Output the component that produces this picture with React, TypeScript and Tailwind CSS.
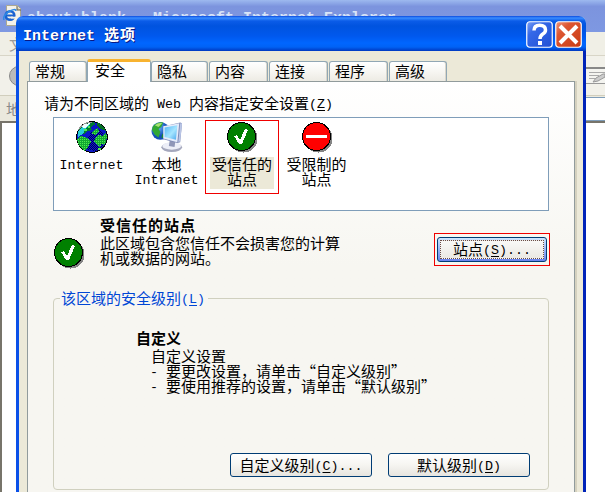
import React from "react";

function T({ children, hot }: { children: string; hot?: string }) {
  const parts = children.split(/([\x20-\x7e]+)/);
  return (
    <>
      {parts.map((p, i) =>
        i % 2 === 0 ? (
          <span key={i}>{p}</span>
        ) : (
          <span key={i} className="align-[1px] font-['Liberation_Mono',monospace] text-[13.33px] leading-[0]">
            {hot && p.includes(hot) ? (
              <>
                {p.slice(0, p.indexOf(hot))}
                <span className="underline decoration-1 underline-offset-2">{hot}</span>
                {p.slice(p.indexOf(hot) + 1)}
              </>
            ) : (
              p
            )}
          </span>
        )
      )}
    </>
  );
}

function Check() {
  return (
    <svg width="32" height="32" viewBox="0 0 32 32" shapeRendering="crispEdges">
      <circle cx="17.5" cy="17.5" r="14" fill="#858585" />
      <circle cx="15.5" cy="15.5" r="14" fill="#008000" stroke="#000" />
      <path d="M8 15l3-1 3 5 5-11 3 1-6 14h-3z" fill="#fff" />
    </svg>
  );
}

function Stop() {
  return (
    <svg width="32" height="32" viewBox="0 0 32 32" shapeRendering="crispEdges">
      <circle cx="17.5" cy="17.5" r="14" fill="#858585" />
      <circle cx="15.5" cy="15.5" r="14" fill="#f00" stroke="#000" />
      <path d="M5 14h21v3H5z" fill="#fff" />
    </svg>
  );
}

function Globe() {
  return (
    <svg width="32" height="32" viewBox="0 0 32 32" shapeRendering="crispEdges">
      <defs>
        <pattern id="dither" width="2" height="2" patternUnits="userSpaceOnUse">
          <path d="M0 0h1v1H0zM1 1h1v1H1z" fill="#00005c" />
        </pattern>
        <pattern id="leaf" width="2" height="2" patternUnits="userSpaceOnUse">
          <path d="M0 0h2v2H0z" fill="#12a832" />
          <path d="M0 0h1v1H0z" fill="#50ea50" />
        </pattern>
      </defs>
      <circle cx="16" cy="16" r="15.3" fill="#0b18c8" stroke="#000" />
      <path d="M15 11l9-2 6 8-1 7-8 6-9-1-3-6z" fill="url(#dither)" />
      <path d="M3 8Q8 1 17 1l3 2-5 3 1 3-5 1-2 3-6 1z" fill="#007a32" />
      <path d="M2 10l5-5 7-2-5 5-2 5-5 3z" fill="#26cfd8" />
      <path d="M5 6l4-3 5-1-5 5z" fill="#f0ffff" />
      <path d="M1 18l4-3 6 2 4 4-3 5-3 4Q2 25 1 18z" fill="url(#leaf)" />
      <path d="M21 1q7 3 9 9l-5-2-4-3z" fill="#046e24" />
      <path d="M17 10l5-3 1 3-4 4-3-1z" fill="url(#leaf)" />
      <path d="M19 17l4-3 3 1 4-4q2 8-2 13l-3-1-1 4-3-3-3-3z" fill="url(#leaf)" />
      <path d="M8 8h3v2H8zM12 5h2v2h-2zM22 27h3v2h-3z" fill="#50ea50" />
      <path d="M2 9Q7 1 16 1" fill="none" stroke="#999" />
    </svg>
  );
}

function Intranet() {
  return (
    <svg width="32" height="32" viewBox="0 0 34 33">
      <defs>
        <linearGradient id="screen" x2="1" y2="1">
          <stop stopColor="#51b5f5" />
          <stop offset=".55" stopColor="#a5e5ff" />
          <stop offset="1" stopColor="#4ca8ee" />
        </linearGradient>
        <radialGradient id="sea" cx=".35" cy=".3">
          <stop stopColor="#6fb8ff" />
          <stop offset="1" stopColor="#1350b8" />
        </radialGradient>
      </defs>
      <circle cx="10" cy="10" r="9.5" fill="url(#sea)" />
      <path d="M2 5q5-5 11-4l-2 5-3 2 2 3-2 6-4-3-3-5z" fill="#32a834" />
      <path d="M4 4q4-3 8-2L8 6z" fill="#a9e274" />
      <path d="M12 13l4 2-2 3-3-1z" fill="#208a35" />
      <ellipse cx="22" cy="27.5" rx="11" ry="5" fill="#a5a8bd" />
      <ellipse cx="22" cy="26" rx="10" ry="4" fill="#eceef7" />
      <path d="M20 19l6 1-1 7-6-1z" fill="#8f96b7" />
      <path d="M14 5l17-4 2 1-2 20-3 1-15-4z" fill="#7c89b5" />
      <path d="M13 5l17-3-2 20-15-4z" fill="#e4ebfa" />
      <path d="M14.5 6.5L28 4l-1.5 15.5-12-3z" fill="url(#screen)" />
      <path d="M31 2l2 0-2 19-2 1z" fill="#bac6e6" />
    </svg>
  );
}

function IeIcon() {
  return (
    <svg width="18" height="22" viewBox="0 0 18 22" className="shrink-0">
      <path d="M3.500.5h11l3 3v17h-14z" fill="#f4f2e9" stroke="#aba891" />
      <path d="M14 1v4h4" fill="#d9d5bc" stroke="#66614b" />
      <circle cx="7" cy="10.500" r="4.300" fill="none" stroke="#1a62d0" strokeWidth="2.600" />
      <path d="M4 10.500h7" stroke="#1a62d0" strokeWidth="2" />
      <path d="M8 11.700h5v2H8z" fill="#f4f2e9" />
      <path d="M1 15Q-1 11 7 6q6-3 6 0" fill="none" stroke="#2e8ae6" strokeWidth="1.500" />
    </svg>
  );
}

function BackWindow() {
  return (
    <div className="flex h-[492px] w-[605px] flex-col overflow-hidden bg-white">
      <div className="flex h-8 shrink-0 bg-linear-to-b from-[#9db9ef] via-[#7c94de] via-20% to-[#7e98e2] pt-[5px] pl-[3px]">
        <IeIcon />
        <span className="ml-[6px] pt-[6px] font-['Liberation_Mono',monospace] text-[15px] leading-[15px] font-bold whitespace-pre text-[#d8e4f8]">
          about:blank - Microsoft Internet Explorer
        </span>
      </div>
      <div className="flex h-6 shrink-0 items-center border-b border-[#d8d5c7] bg-[#f0efe6] pl-[9px] text-[15px] text-[#999]">文件</div>
      <div className="flex h-10 shrink-0 items-center justify-between border-b border-[#d1cebd] bg-[#f2f1ea] pl-[9px]">
        <div className="size-5 rounded-full border border-[#888] bg-[#bbb]" />
        <svg width="24" height="18" viewBox="0 0 24 18">
          <path d="M1 .5h24v16H1z" fill="#f4f4f0" stroke="#999" />
          <path d="M0 1h24" stroke="#888" strokeWidth="2" />
          <path d="M8 5.500h16M8 8.500h10M8 11.500h6" stroke="#aaa" />
          <path d="M12 15l3-4 7-4 2 0v3l-7 4z" fill="#ccc" stroke="#999" />
        </svg>
      </div>
      <div className="flex h-[25px] shrink-0 items-center justify-between bg-[#ebe9dd] pl-[6px] text-[15px] text-[#888]">
        <span>地址</span>
        <div className="h-6 w-[25px] border-y border-[#7f9db9] bg-white" />
      </div>
      <div className="flex-1 border-t-2 border-l-2 border-[#77746a] bg-white" />
    </div>
  );
}

function Tab({ label, w }: { label: string; w: string }) {
  return (
    <div className={`${w} h-5 shrink-0 rounded-t-[3px] border border-b-0 border-[#91a7b4] bg-linear-to-b from-white via-[#f7f6f2] to-[#edebe4] pt-px pl-[5px] shadow-[inset_-1px_0_0_#d9d6cb]`}>
      <T>{label}</T>
    </div>
  );
}

function ZoneItem({ icon, lines }: { icon: React.ReactNode; lines: string[] }) {
  return (
    <div className="flex w-[75px] shrink-0 flex-col items-center pt-[3px]">
      <div className="flex h-[35px] justify-center">{icon}</div>
      {lines.map((l) => (
        <div key={l} className="h-[15px] whitespace-nowrap">
          <T>{l}</T>
        </div>
      ))}
    </div>
  );
}

function Button({ w, label, hot }: { w: string; label: string; hot: string }) {
  return (
    <button className={`${w} flex h-6 shrink-0 items-center justify-center rounded-[3px] border border-[#003c74] bg-linear-to-b from-white via-[#f6f5f1] to-[#e6e4df] pb-[2px] leading-[15px] whitespace-nowrap`}>
      <span>
        <T hot={hot}>{label}</T>
      </span>
    </button>
  );
}

function Dialog() {
  return (
    <div className="absolute top-4 left-4 flex h-[476px] w-[570px] flex-col overflow-hidden rounded-t-[7px] bg-[#ece9d8]">
      <div className="flex h-[35px] shrink-0 items-center bg-[linear-gradient(to_bottom,#0a4be0_0,#3a8dff_2px,#0b5ce8_5px,#0053df_10px,#0058ee_20px,#0066ff_27px,#0062f5_31px,#0038c0_35px)] pr-[4px] pl-[7px] text-white">
        <div className="flex-1 pt-[2px] text-[15px] leading-[17px] font-bold tracking-[0.9px] whitespace-pre [text-shadow:1px_1px_0_#0a1883]">
          <span className="font-['Liberation_Mono',monospace] text-[15px] tracking-[0px]">Internet </span>选项
        </div>
        <svg width="27" height="27" viewBox="0 0 27 27" className="mt-[1px]">
          <defs>
            <linearGradient id="help" x2="1" y2="1">
              <stop stopColor="#7da2f5" />
              <stop offset=".3" stopColor="#3568e8" />
              <stop offset="1" stopColor="#2050d4" />
            </linearGradient>
          </defs>
          <rect x=".75" y=".75" width="25.5" height="25.5" rx="3" fill="url(#help)" stroke="#fff" strokeWidth="1.2" />
          <path d="M8 9.500Q8 4.200 13.700 4.200 19.500 4.200 19.500 9q0 2.500-3 4.300Q14 15 14 18" fill="none" stroke="#fff" strokeWidth="3.500" />
          <path d="M12 20h4v4h-4z" fill="#fff" />
        </svg>
        <svg width="27" height="27" viewBox="0 0 27 27" className="mt-[1px] ml-[2px]">
          <defs>
            <linearGradient id="close" x2="1" y2="1">
              <stop stopColor="#ef9a80" />
              <stop offset=".3" stopColor="#dd5632" />
              <stop offset="1" stopColor="#c83b12" />
            </linearGradient>
          </defs>
          <rect x=".75" y=".75" width="25.5" height="25.5" rx="3" fill="url(#close)" stroke="#fff" strokeWidth="1.2" />
          <path d="M5 5l17 17M22 5L5 22" stroke="#fff" strokeWidth="4" />
        </svg>
      </div>
      <div className="flex min-h-0 flex-1 flex-col border-r-[3px] border-l-[3px] border-r-[#0023b8] border-l-[#0a50e8] px-2 pt-2">
        <div className="z-10 -mb-px flex h-[23px] shrink-0 items-end pr-2 pb-px pl-[2px]">
          <Tab w="w-[58px]" label="常规" />
          <div className="z-10 -mb-px h-[23px] w-16 shrink-0 rounded-t-[3px] border-x border-t-[3px] border-x-[#91a7b4] border-t-[#f8b330] bg-white pl-[7px]">
            安全
          </div>
          <Tab w="w-[57px]" label="隐私" />
          <Tab w="w-[59px] ml-[1px]" label="内容" />
          <Tab w="w-[59px] ml-[1px]" label="连接" />
          <Tab w="w-[59px] ml-[1px]" label="程序" />
          <Tab w="w-[58px] ml-[1px]" label="高级" />
        </div>
        <div className="flex min-h-0 flex-1 flex-col border-x border-t border-[#919b9c] bg-linear-to-b from-white to-[#f7f6f1] to-45% pr-[23px] pl-[25px] shadow-[2px_0_0_#d5d1bf]">
          <div className="mt-[13px] -ml-[9px] h-[15px] shrink-0">
            <T hot="Z">请为不同区域的 Web 内容指定安全设置(Z)</T>
          </div>
          <div className="mt-[7px] flex h-[94px] w-[496px] shrink-0 border border-[#7f9db9] bg-white">
            <ZoneItem icon={<Globe />} lines={["Internet"]} />
            <ZoneItem icon={<Intranet />} lines={["本地", "Intranet"]} />
            <div className="mt-[2px] ml-[1px] flex h-[74px] w-[74px] shrink-0 flex-col items-center border border-[#f00000]">
              <div className="flex h-9">
                <Check />
              </div>
              <div className="h-8 w-16 bg-[#ece9d8] text-center">
                <div className="-mt-px h-[15px]">受信任的</div>
                <div>站点</div>
              </div>
            </div>
            <ZoneItem icon={<Stop />} lines={["受限制的", "站点"]} />
          </div>
          <div className="mt-[6px] flex h-[50px] shrink-0">
            <div className="mt-[20px] w-12 shrink-0">
              <Check />
            </div>
            <div className="-ml-px w-[334px] shrink-0">
              <div className="h-[18px] font-bold tracking-[1px]">受信任的站点</div>
              <div>此区域包含您信任不会损害您的计算</div>
              <div>机或数据的网站。</div>
            </div>
            <div className="mt-[16px] h-[33px] w-[116px] shrink-0 border border-[#f00000] px-[2px] pt-[3px]">
              <button className="flex h-[25px] w-[110px] rounded-[3px] border border-[#003c74] bg-linear-to-b from-[#cee7ff] to-[#6982ee] p-[2px]">
                <span className="flex h-full w-full items-center justify-center border border-dotted border-[#6b4d48] bg-linear-to-b from-[#f9f9f7] to-[#ebe9e3] pb-[2px] whitespace-nowrap">
                  <span>
                    <T hot="S">站点(S)...</T>
                  </span>
                </span>
              </button>
            </div>
          </div>
          <div className="mt-[23px] flex h-[200px] w-[496px] shrink-0 flex-col">
            <div className="z-10 ml-[7px] h-[15px] w-[148px] bg-[#f7f6f2] pl-[1px] text-[#0046d5]">
              <T hot="L">该区域的安全级别(L)</T>
            </div>
            <div className="-mt-[7px] flex h-[193px] flex-col rounded-[4px] border border-[#d0d0bf]">
              <div className="mt-[31px] ml-[82px] h-[18px] font-bold">自定义</div>
              <div className="ml-[97px]">自定义设置</div>
              <div className="ml-[96px] h-[15px]">
                <T>- </T>要更改设置，请单击“自定义级别”
              </div>
              <div className="ml-[96px] h-[15px]">
                <T>- </T>要使用推荐的设置，请单击“默认级别”
              </div>
              <div className="mt-[60px] ml-[176px] flex gap-4">
                <Button w="w-[142px]" label="自定义级别(C)..." hot="C" />
                <Button w="w-[142px]" label="默认级别(D)" hot="D" />
              </div>
            </div>
          </div>
        </div>
      </div>
    </div>
  );
}

export default function App() {
  return (
    <div
      lang="zh-CN"
      className="relative h-[492px] w-[605px] overflow-hidden font-['Noto_Sans_CJK_SC',sans-serif] text-[15px] leading-[15px] font-normal whitespace-nowrap text-black [font-kerning:none]"
    >
      <BackWindow />
      <Dialog />
    </div>
  );
}
